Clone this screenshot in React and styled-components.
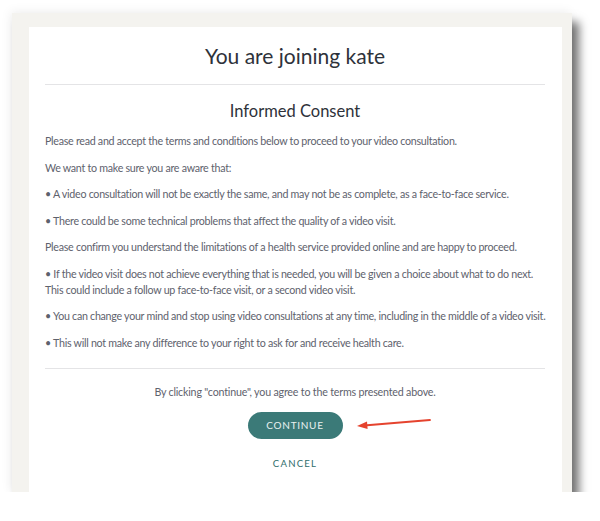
import styled, { createGlobalStyle } from "styled-components";

const GlobalStyle = createGlobalStyle`
body {
    margin: 0;
    background: #fff;
    font-family: Lato, "Open Sans", sans-serif;
}
`
const Frame = styled.div`
position: relative;
margin: 13px 0 0 12px;
width: 560px;
height: 479px;
box-sizing: border-box;
padding: 14px 10px 0 17px;
background: #f4f3ef;
box-shadow: 7px 9px 9px rgba(0, 0, 0, 0.55), -2px -2px 10px rgba(0, 0, 0, 0.06);
display: flex;
`
const Panel = styled.div`
flex: 1;
background: #fff;
padding: 0 17px 0 16px;
display: flex;
flex-direction: column;
overflow: hidden;
& > * {
    flex-shrink: 0;
}
`
const Title = styled.h1`
margin: 0;
height: 57px;
display: flex;
align-items: center;
justify-content: center;
font-weight: 400;
font-size: 21px;
color: #2e323a;
`
const Divider = styled.hr`
margin: 0;
border: none;
border-top: 1px solid #e4e4e6;
`
const Subtitle = styled.h2`
margin: 0;
padding: 16px 0 0;
height: 37px;
text-align: center;
font-weight: 400;
font-size: 16.5px;
line-height: 20px;
color: #2e323a;
box-sizing: border-box;
`
const Body = styled.div`
padding: 11px 0 17px;
display: flex;
flex-direction: column;
row-gap: 10.5px;
`
const Para = styled.p`
margin: 0;
font-size: 10.7px;
line-height: 16px;
letter-spacing: -0.28px;
white-space: nowrap;
color: #5e626d;
`
const Footer = styled.div`
display: flex;
flex-direction: column;
align-items: center;
padding-top: 15px;
`
const Notice = styled.p`
margin: 0;
font-size: 10.7px;
line-height: 16px;
letter-spacing: -0.2px;
color: #5e626d;
`
const ButtonRow = styled.div`
position: relative;
display: flex;
margin-top: 12px;
`
const PrimaryButton = styled.button`
width: 95px;
height: 27px;
border: none;
border-radius: 14px;
background: #3b7a78;
color: #e8f1f0;
font-family: inherit;
font-size: 10px;
font-weight: 400;
letter-spacing: 0.7px;
cursor: pointer;
`
const LinkButton = styled.button`
margin-top: 19px;
border: none;
background: none;
padding: 0;
line-height: 12px;
color: #2f6e6c;
font-family: inherit;
font-size: 9.6px;
font-weight: 400;
letter-spacing: 1.2px;
cursor: pointer;
`
const Arrow = styled.svg`
position: absolute;
left: 108px;
top: 5px;
`

const paragraphs = [
    ["Please read and accept the terms and conditions below to proceed to your video consultation."],
    ["We want to make sure you are aware that:"],
    ["• A video consultation will not be exactly the same, and may not be as complete, as a face-to-face service."],
    ["• There could be some technical problems that affect the quality of a video visit."],
    ["Please confirm you understand the limitations of a health service provided online and are happy to proceed."],
    ["• If the video visit does not achieve everything that is needed, you will be given a choice about what to do next.", "This could include a follow up face-to-face visit, or a second video visit."],
    ["• You can change your mind and stop using video consultations at any time, including in the middle of a video visit."],
    ["• This will not make any difference to your right to ask for and receive health care."],
]

const App = () => {
    return (
        <>
            <GlobalStyle />
            <Frame>
                <Panel>
                    <Title>You are joining kate</Title>
                    <Divider />
                    <Subtitle>Informed Consent</Subtitle>
                    <Body>
                        {paragraphs.map((lines, idx) => (
                            <Para key={idx}>
                                {lines.map((line, i) => (
                                    <span key={i}>{i > 0 && <br />}{line}</span>
                                ))}
                            </Para>
                        ))}
                    </Body>
                    <Divider />
                    <Footer>
                        <Notice>By clicking "continue", you agree to the terms presented above.</Notice>
                        <ButtonRow>
                            <PrimaryButton>CONTINUE</PrimaryButton>
                            {/* red annotation arrow */}
                            <Arrow width="76" height="16" viewBox="0 0 76 16">
                                <line x1="74" y1="3" x2="8" y2="8.5" stroke="#e5432e" strokeWidth="1.8" strokeLinecap="round" />
                                <polygon points="1,9 11,4.5 11.6,12" fill="#e5432e" />
                            </Arrow>
                        </ButtonRow>
                        <LinkButton>CANCEL</LinkButton>
                    </Footer>
                </Panel>
            </Frame>
        </>
    )
}
export default App;
